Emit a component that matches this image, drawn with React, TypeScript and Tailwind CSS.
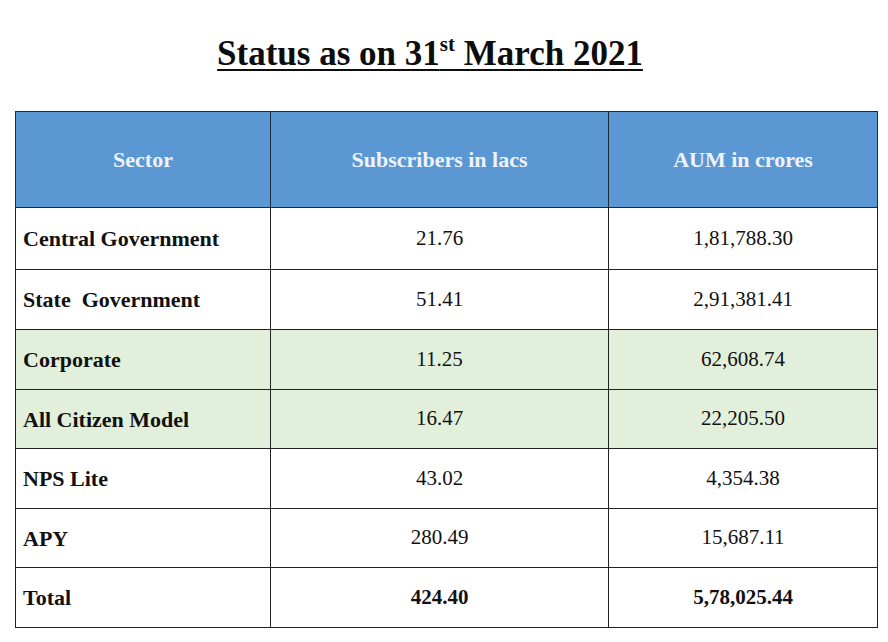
import React from 'react';

type Row = { sector: string; subs: string; aum: string; green?: boolean; total?: boolean; h: string };

const rows: Row[] = [
    { sector: 'Central Government', subs: '21.76', aum: '1,81,788.30', h: 'h-[62px]' },
    { sector: 'State  Government', subs: '51.41', aum: '2,91,381.41', h: 'h-[60px]' },
    { sector: 'Corporate', subs: '11.25', aum: '62,608.74', green: true, h: 'h-[60px]' },
    { sector: 'All Citizen Model', subs: '16.47', aum: '22,205.50', green: true, h: 'h-[59px]' },
    { sector: 'NPS Lite', subs: '43.02', aum: '4,354.38', h: 'h-[60px]' },
    { sector: 'APY', subs: '280.49', aum: '15,687.11', h: 'h-[59px]' },
    { sector: 'Total', subs: '424.40', aum: '5,78,025.44', total: true, h: 'h-[60px]' },
];

const App = () => {
    return (
        <div className="w-[888px] h-[642px] bg-white text-[#111] font-['Liberation_Serif',serif] overflow-hidden">
            {/* heading */}
            <div className="pt-[34px] pr-[28px] text-center">
                <h1 className="inline-block text-[35px] leading-[40px] font-bold underline decoration-[2px] underline-offset-[4px] text-[#0d0d0d]">
                    Status as on 31<sup className="text-[21px] relative top-[-14px]">st</sup> March 2021
                </h1>
            </div>

            <table className="mt-[37px] ml-[15px] w-[862px] table-fixed border-collapse">
                <colgroup>
                    <col className="w-[255px]" />
                    <col className="w-[338px]" />
                    <col className="w-[269px]" />
                </colgroup>
                <thead>
                    <tr className="h-[96px] bg-[#5b97d3]">
                        <th className="border border-[#1d2a3a] text-[22px] font-bold text-[#eef3fb] text-center">Sector</th>
                        <th className="border border-[#1d2a3a] text-[22px] font-bold text-[#eef3fb] text-center">Subscribers in lacs</th>
                        <th className="border border-[#1d2a3a] text-[22px] font-bold text-[#eef3fb] text-center">AUM in crores</th>
                    </tr>
                </thead>
                <tbody>
                    {rows.map((r) => (
                        <tr key={r.sector} className={`${r.h} ${r.green ? 'bg-[#e2efda]' : 'bg-white'}`}>
                            <td className="border border-[#222] pl-[7px] text-[22px] font-bold whitespace-pre">{r.sector}</td>
                            <td className={`border border-[#222] text-center text-[21px] ${r.total ? 'font-bold' : ''}`}>{r.subs}</td>
                            <td className={`border border-[#222] text-center text-[21px] ${r.total ? 'font-bold' : ''}`}>{r.aum}</td>
                        </tr>
                    ))}
                </tbody>
            </table>
        </div>
    );
};

export default App;
